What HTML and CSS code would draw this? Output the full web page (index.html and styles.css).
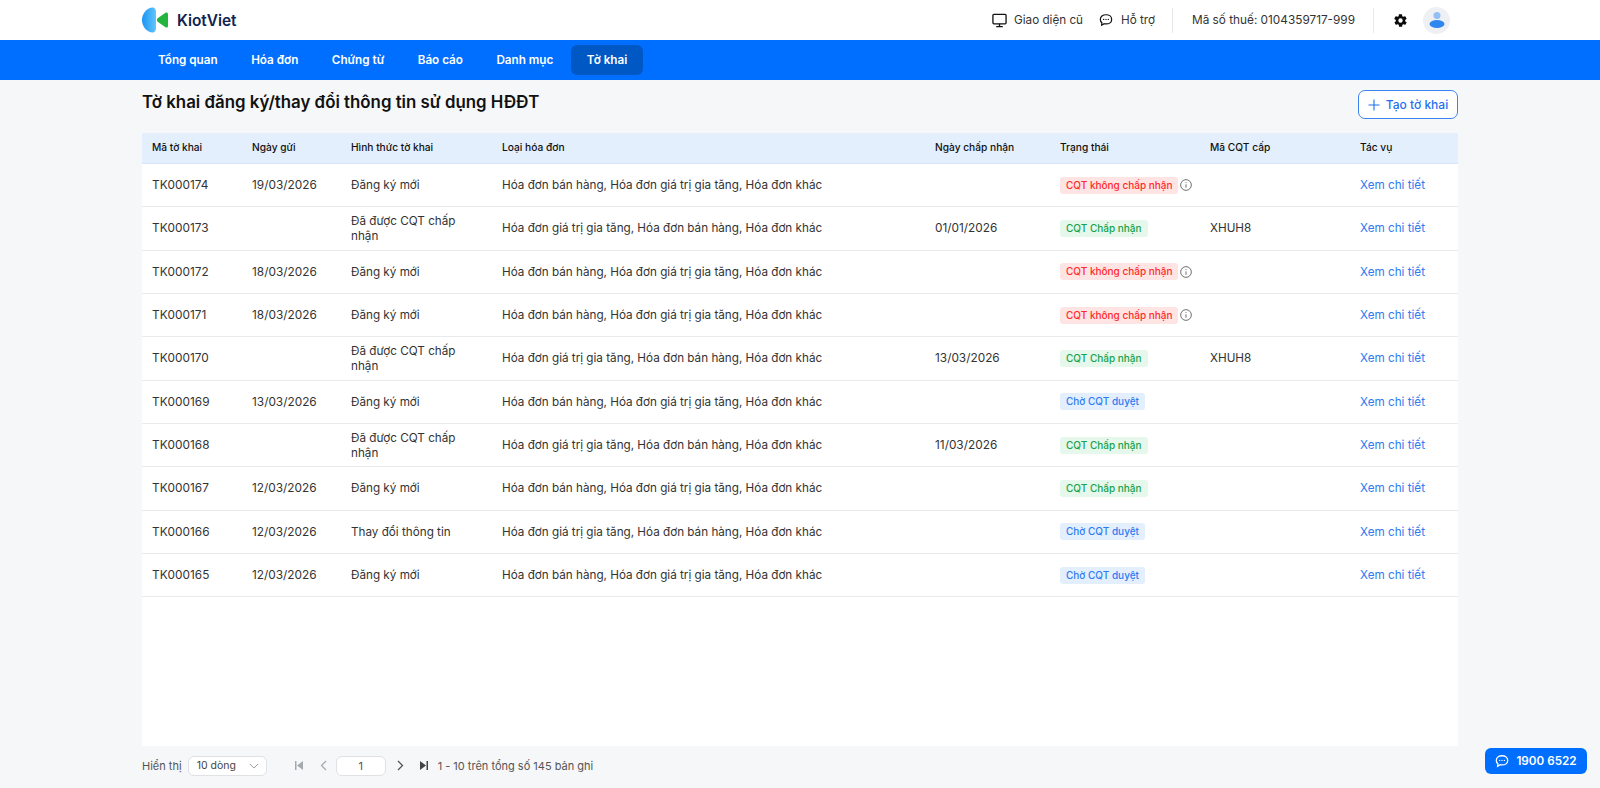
FILE: index.html
```html
<!DOCTYPE html>
<html lang="vi">
<head>
<meta charset="utf-8">
<title>Tờ khai</title>
<link rel="stylesheet" href="styles.css">
</head>
<body>
<header class="topbar">
  <div class="wrap topbar-in">
    <div class="logo">
      <svg width="26" height="26" viewBox="0 0 26 26"><defs><linearGradient id="lg1" x1="0" y1="0" x2="1" y2="0"><stop offset="0" stop-color="#1a94f5"/><stop offset="1" stop-color="#62c6fc"/></linearGradient></defs><path d="M10 .5C4 1.500 0 7 0 13s4 11.500 10 12.500c2.500.4 4-1.500 4-4.500V5c0-3-1.500-4.900-4-4.500z" fill="url(#lg1)"/><path d="M26 7c0-1.500-1.500-2-2.500-1.200L16 11c-1.500 1-1.500 3 0 4l7.500 5.200c1 .8 2.500.3 2.500-1.200z" fill="#22b43c"/></svg>
      <span class="logo-text">KiotViet</span>
    </div>
    <div class="top-right">
      <a class="top-link"><svg width="15" height="15" viewBox="0 0 16 16" fill="none" stroke="#111" stroke-width="1.400"><rect x="1" y="1.500" width="14" height="10" rx="1"/><path d="M8 11.500V14.500M4.500 14.500h7"/></svg>Giao diện cũ</a>
      <a class="top-link help"><svg width="14" height="14" viewBox="0 0 16 16" fill="none" stroke="#111" stroke-width="1.400"><path d="M8 2c3.700 0 6.500 2.300 6.500 5.300S11.700 12.500 8 12.500c-.7 0-1.400-.1-2-.2L3 14l.3-2.900C2.200 10.100 1.500 8.800 1.500 7.300 1.500 4.300 4.300 2 8 2z"/><circle cx="5.300" cy="7.300" r=".8" fill="#111" stroke="none"/><circle cx="8" cy="7.300" r=".8" fill="#111" stroke="none"/><circle cx="10.700" cy="7.300" r=".8" fill="#111" stroke="none"/></svg>Hỗ trợ</a>
      <span class="vsep"></span>
      <span class="tax">Mã số thuế: 0104359717-999</span>
      <span class="vsep"></span>
      <svg class="gear" width="15" height="15" viewBox="0 0 24 24"><path fill="#0b0b0b" fill-rule="evenodd" d="M19.400 13c.1-.3.100-.7.100-1s0-.7-.1-1l2.100-1.600c.2-.2.200-.4.100-.6l-2-3.500c-.1-.2-.4-.3-.6-.2l-2.500 1c-.5-.4-1.100-.7-1.700-1l-.4-2.600c0-.3-.2-.5-.5-.5h-4c-.3 0-.5.200-.5.500l-.4 2.600c-.6.300-1.200.6-1.700 1l-2.500-1c-.2-.1-.5 0-.6.200l-2 3.500c-.1.200-.1.500.1.600L4.600 11c-.1.300-.1.700-.1 1s0 .7.100 1l-2.100 1.600c-.2.200-.2.400-.1.600l2 3.500c.1.200.4.300.6.200l2.500-1c.5.400 1.100.7 1.700 1l.4 2.600c0 .3.200.5.500.5h4c.3 0 .5-.2.500-.5l.4-2.600c.6-.3 1.200-.6 1.700-1l2.500 1c.2.100.5 0 .6-.2l2-3.500c.1-.2.100-.5-.1-.6L19.400 13zM12 15.500a3.500 3.500 0 1 1 0-7 3.500 3.500 0 0 1 0 7z"/></svg>
      <span class="avatar"><svg width="16" height="18" viewBox="0 0 16 18"><circle cx="8" cy="4.500" r="3.500" fill="#93bff5"/><ellipse cx="8" cy="13" rx="7.500" ry="4" fill="#2f86ef"/></svg></span>
    </div>
  </div>
</header>
<nav class="navbar">
  <div class="wrap nav-in">
    <a class="nav-item">Tổng quan</a>
    <a class="nav-item">Hóa đơn</a>
    <a class="nav-item">Chứng từ</a>
    <a class="nav-item">Báo cáo</a>
    <a class="nav-item">Danh mục</a>
    <a class="nav-item active">Tờ khai</a>
  </div>
</nav>
<main class="wrap content">
  <div class="title-row">
    <h1>Tờ khai đăng ký/thay đổi thông tin sử dụng HĐĐT</h1>
    <button class="create"><svg width="12" height="12" viewBox="0 0 12 12" stroke="#1f6fee" stroke-width="1.100"><path d="M6 .5v11M.5 6h11"/></svg>Tạo tờ khai</button>
  </div>
  <div class="card">
    <div class="row head">
      <div>Mã tờ khai</div><div>Ngày gửi</div><div>Hình thức tờ khai</div><div>Loại hóa đơn</div><div>Ngày chấp nhận</div><div>Trạng thái</div><div>Mã CQT cấp</div><div>Tác vụ</div>
    </div>
    <div class="row"><div>TK000174</div><div>19/03/2026</div><div>Đăng ký mới</div><div>Hóa đơn bán hàng, Hóa đơn giá trị gia tăng, Hóa đơn khác</div><div></div><div class="st"><span class="tag red">CQT không chấp nhận</span><svg class="info" width="12" height="12" viewBox="0 0 13 13" fill="none" stroke="#666"><circle cx="6.500" cy="6.500" r="5.800"/><path d="M6.500 5.800v3.700M6.500 3.400v1"/></svg></div><div></div><div><a class="lnk">Xem chi tiết</a></div></div>
    <div class="row"><div>TK000173</div><div></div><div>Đã được CQT chấp nhận</div><div>Hóa đơn giá trị gia tăng, Hóa đơn bán hàng, Hóa đơn khác</div><div>01/01/2026</div><div class="st"><span class="tag green">CQT Chấp nhận</span></div><div>XHUH8</div><div><a class="lnk">Xem chi tiết</a></div></div>
    <div class="row"><div>TK000172</div><div>18/03/2026</div><div>Đăng ký mới</div><div>Hóa đơn bán hàng, Hóa đơn giá trị gia tăng, Hóa đơn khác</div><div></div><div class="st"><span class="tag red">CQT không chấp nhận</span><svg class="info" width="12" height="12" viewBox="0 0 13 13" fill="none" stroke="#666"><circle cx="6.500" cy="6.500" r="5.800"/><path d="M6.500 5.800v3.700M6.500 3.400v1"/></svg></div><div></div><div><a class="lnk">Xem chi tiết</a></div></div>
    <div class="row"><div>TK000171</div><div>18/03/2026</div><div>Đăng ký mới</div><div>Hóa đơn bán hàng, Hóa đơn giá trị gia tăng, Hóa đơn khác</div><div></div><div class="st"><span class="tag red">CQT không chấp nhận</span><svg class="info" width="12" height="12" viewBox="0 0 13 13" fill="none" stroke="#666"><circle cx="6.500" cy="6.500" r="5.800"/><path d="M6.500 5.800v3.700M6.500 3.400v1"/></svg></div><div></div><div><a class="lnk">Xem chi tiết</a></div></div>
    <div class="row"><div>TK000170</div><div></div><div>Đã được CQT chấp nhận</div><div>Hóa đơn giá trị gia tăng, Hóa đơn bán hàng, Hóa đơn khác</div><div>13/03/2026</div><div class="st"><span class="tag green">CQT Chấp nhận</span></div><div>XHUH8</div><div><a class="lnk">Xem chi tiết</a></div></div>
    <div class="row"><div>TK000169</div><div>13/03/2026</div><div>Đăng ký mới</div><div>Hóa đơn bán hàng, Hóa đơn giá trị gia tăng, Hóa đơn khác</div><div></div><div class="st"><span class="tag blue">Chờ CQT duyệt</span></div><div></div><div><a class="lnk">Xem chi tiết</a></div></div>
    <div class="row"><div>TK000168</div><div></div><div>Đã được CQT chấp nhận</div><div>Hóa đơn giá trị gia tăng, Hóa đơn bán hàng, Hóa đơn khác</div><div>11/03/2026</div><div class="st"><span class="tag green">CQT Chấp nhận</span></div><div></div><div><a class="lnk">Xem chi tiết</a></div></div>
    <div class="row"><div>TK000167</div><div>12/03/2026</div><div>Đăng ký mới</div><div>Hóa đơn bán hàng, Hóa đơn giá trị gia tăng, Hóa đơn khác</div><div></div><div class="st"><span class="tag green">CQT Chấp nhận</span></div><div></div><div><a class="lnk">Xem chi tiết</a></div></div>
    <div class="row"><div>TK000166</div><div>12/03/2026</div><div>Thay đổi thông tin</div><div>Hóa đơn giá trị gia tăng, Hóa đơn bán hàng, Hóa đơn khác</div><div></div><div class="st"><span class="tag blue">Chờ CQT duyệt</span></div><div></div><div><a class="lnk">Xem chi tiết</a></div></div>
    <div class="row"><div>TK000165</div><div>12/03/2026</div><div>Đăng ký mới</div><div>Hóa đơn bán hàng, Hóa đơn giá trị gia tăng, Hóa đơn khác</div><div></div><div class="st"><span class="tag blue">Chờ CQT duyệt</span></div><div></div><div><a class="lnk">Xem chi tiết</a></div></div>
  </div>
  <div class="pager">
    <span>Hiển thị</span>
    <span class="select">10 dòng<svg width="10" height="6" viewBox="0 0 12 7" fill="none" stroke="#888" stroke-width="1"><path d="M1 1l5 5 5-5"/></svg></span>
    <svg class="first" width="8" height="9" viewBox="0 0 8 9"><path d="M0 0h1.500v9H0zM8 0v9L2 4.500z" fill="#a5a9b0"/></svg>
    <svg class="prev" width="7" height="11" viewBox="0 0 7 11" fill="none" stroke="#a5a9b0" stroke-width="1.300"><path d="M6 1L1.500 5.500 6 10"/></svg>
    <span class="page-input">1</span>
    <svg class="next" width="7" height="11" viewBox="0 0 7 11" fill="none" stroke="#555" stroke-width="1.300"><path d="M1 1l4.500 4.500L1 10"/></svg>
    <svg class="last" width="8" height="9" viewBox="0 0 8 9"><path d="M0 0v9l6-4.500zM6.500 0H8v9H6.500z" fill="#444"/></svg>
    <span class="count">1 - 10 trên tổng số 145 bản ghi</span>
  </div>
</main>
<a class="hotline"><svg width="14" height="14" viewBox="0 0 16 16" fill="none" stroke="#fff" stroke-width="1.500"><path d="M8 2c3.700 0 6.500 2.300 6.500 5.300S11.700 12.500 8 12.500c-.7 0-1.400-.1-2-.2L3 14l.3-2.900C2.200 10.100 1.500 8.800 1.500 7.300 1.500 4.300 4.300 2 8 2z"/><circle cx="5.300" cy="7.300" r=".8" fill="#fff" stroke="none"/><circle cx="8" cy="7.300" r=".8" fill="#fff" stroke="none"/><circle cx="10.700" cy="7.300" r=".8" fill="#fff" stroke="none"/></svg>1900 6522</a>
</body>
</html>
```
FILE: styles.css
```css
* { box-sizing: border-box; }
html, body { margin: 0; height: 100%; }
body {
  font-family: Inter, "Noto Sans", sans-serif;
  font-size: 11.7px;
  color: #333;
  background: #f6f7f9;
  overflow: hidden;
}
.wrap { width: 1316px; margin: 0 auto; }
.topbar { height: 40px; background: #fff; }
.topbar-in { height: 40px; display: flex; align-items: center; justify-content: space-between; }
.logo { display: flex; align-items: center; gap: 9px; }
.logo-text { font-size: 15.4px; font-weight: 600; color: #0f2350; }
.top-right { display: flex; align-items: center; color: #333; padding-right: 8px; }
.top-link { display: flex; align-items: center; gap: 7px; margin-right: 16px; }
.top-link.help { gap: 8px; margin-right: 17px; }
.vsep { width: 1px; height: 25px; background: #e6e8ec; }
.tax { margin: 0 18px 0 19px; font-size: 11.8px; }
.gear { margin: 0 15px 0 19px; }
.avatar { width: 27px; height: 27px; border-radius: 50%; background: #eef0f3; display: flex; align-items: center; justify-content: center; }
.navbar { height: 40px; background: #006fff; }
.nav-in { display: flex; align-items: center; height: 40px; }
.nav-item { color: #fff; font-weight: 600; padding: 0 16px; height: 30px; line-height: 31px; border-radius: 6px; margin-right: 1.500px; }
.nav-item.active { background: #0058c4; }
.title-row { display: flex; justify-content: space-between; align-items: flex-start; height: 53px; padding-top: 10px; }
h1 { margin: 1px 0 0; font-size: 16.85px; font-weight: 600; color: #111; line-height: 22px; }
.create { display: flex; align-items: center; gap: 6px; height: 29px; width: 100px; justify-content: center; background: #fff; border: 1px solid #3b82f0; border-radius: 7px; color: #1f6fee; font: 500 12px Inter, sans-serif; }
.card { height: 613px; background: #fff; }
.row { display: grid; grid-template-columns: 100px 99px 151px 433px 125px 150px 150px 108px; height: 43.33px; border-bottom: 1px solid #e9eaec; align-items: center; }
.row > div { padding-left: 10px; padding-top: 1px; line-height: 15px; }
.row > div.st { padding-top: 0; }
.row > div:nth-child(3) { padding-right: 20px; }
.row > div:nth-child(1), .row > div:nth-child(2), .row > div:nth-child(5) { font-size: 11.85px; }
.row.head { height: 31px; background: #e3effd; border-bottom: 1px solid #d6e6fa; color: #111; }
.row.head > div { font-size: 10.2px; font-weight: 500; padding-top: 0; padding-bottom: 2px; }
.st { display: flex; align-items: center; gap: 2px; }
.tag { display: inline-block; height: 17px; line-height: 17px; padding: 0 6px; border-radius: 3px; font-size: 10px; font-weight: 500; white-space: nowrap; }
.red { background: #ffe4e4; color: #ff2a2a; }
.green { background: #e6f7ec; color: #16a34a; }
.blue { background: #e3effd; color: #2f7bf0; }
.lnk { color: #2f7bf0; }
.pager { display: flex; align-items: center; height: 39px; color: #555; font-size: 11px; }
.select { display: flex; align-items: center; justify-content: space-between; width: 79px; height: 20px; margin-left: 6px; padding: 0 7px 0 8px; background: #fff; border: 1px solid #dfe1e5; border-radius: 6px; color: #444; font-size: 10.5px; }
.first { margin-left: 28px; }
.prev { margin-left: 17px; }
.page-input { width: 50px; height: 20px; margin-left: 9px; background: #fff; border: 1px solid #dfe1e5; border-radius: 6px; text-align: center; line-height: 18px; }
.next { margin-left: 11px; }
.last { margin-left: 16px; }
.count { margin-left: 10px; }
.hotline { position: fixed; left: 1485px; top: 748px; width: 102px; height: 26px; display: flex; align-items: center; justify-content: center; gap: 7px; background: #006fff; color: #fff; font-weight: 600; border-radius: 6px; }
```
